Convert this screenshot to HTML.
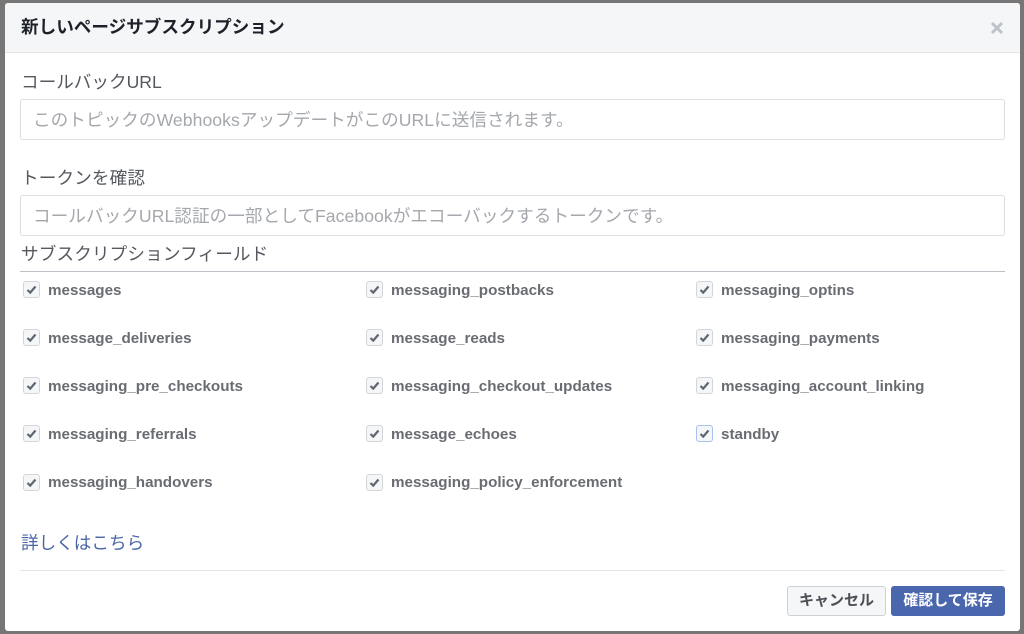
<!DOCTYPE html>
<html lang="ja"><head><meta charset="utf-8">
<style>
html,body{margin:0;padding:0;width:1024px;height:634px;overflow:hidden;background:#767676;font-family:"Liberation Sans","Noto Sans CJK JP",sans-serif}
.a{position:absolute;white-space:nowrap}
#d{position:absolute;left:5px;top:3px;width:1015px;height:628px;background:#fff;border-radius:3px;overflow:hidden}
#h{position:absolute;left:0;top:0;width:1015px;height:49px;background:#f5f6f7;border-bottom:1px solid #e5e5e5}
.t{font-size:17.6px;line-height:24px;color:#55585e;letter-spacing:.14px}
.i{position:absolute;left:20px;border:1px solid #dcdee2;border-radius:3px;box-sizing:border-box;width:985px;height:41px}
.p{font-size:17.6px;line-height:24px;color:#a4a7ac;letter-spacing:.06px}
.c{position:absolute;width:17px;height:17px;box-sizing:border-box;border:1px solid #d3d5d9;border-radius:3px;background:#f5f6f7}
.c svg{position:absolute;left:1px;top:1px}
.l{font-size:15.2px;font-weight:bold;line-height:18px;color:#696c72}
</style></head><body>
<div id="d"><div id="h"></div></div>
<div class="a" style="left:21px;top:15px;font-size:17.6px;line-height:24px;font-weight:bold;color:#1d2129">新しいページサブスクリプション</div>
<svg class="a" style="left:990px;top:21px" width="14" height="14" viewBox="0 0 14 14"><path d="M2 2L12 12M12 2L2 12" stroke="#bec2c9" stroke-width="3"/></svg>
<div class="a t" style="left:21px;top:70px;letter-spacing:0">コールバックURL</div>
<div class="i" style="top:99px"></div>
<div class="a p" style="left:33px;top:108px">このトピックのWebhooksアップデートがこのURLに送信されます。</div>
<div class="a t" style="left:21px;top:166px">トークンを確認</div>
<div class="i" style="top:195px"></div>
<div class="a p" style="left:33px;top:204px">コールバックURL認証の一部としてFacebookがエコーバックするトークンです。</div>
<div class="a t" style="left:21px;top:242px">サブスクリプションフィールド</div>
<div class="a" style="left:20px;top:271px;width:985px;height:1px;background:#bcc0c6"></div>

<div class="c" style="left:23px;top:281px"><svg width="13" height="13" viewBox="0 0 13 13"><path d="M2.5 7L5.2 9.6L10.5 3.5" fill="none" stroke="#5f6673" stroke-width="2.2"/></svg></div><div class="a l" style="left:48px;top:282px">messages</div>
<div class="c" style="left:366px;top:281px"><svg width="13" height="13" viewBox="0 0 13 13"><path d="M2.5 7L5.2 9.6L10.5 3.5" fill="none" stroke="#5f6673" stroke-width="2.2"/></svg></div><div class="a l" style="left:391px;top:282px">messaging_postbacks</div>
<div class="c" style="left:696px;top:281px"><svg width="13" height="13" viewBox="0 0 13 13"><path d="M2.5 7L5.2 9.6L10.5 3.5" fill="none" stroke="#5f6673" stroke-width="2.2"/></svg></div><div class="a l" style="left:721px;top:282px">messaging_optins</div>

<div class="c" style="left:23px;top:329px"><svg width="13" height="13" viewBox="0 0 13 13"><path d="M2.5 7L5.2 9.6L10.5 3.5" fill="none" stroke="#5f6673" stroke-width="2.2"/></svg></div><div class="a l" style="left:48px;top:330px">message_deliveries</div>
<div class="c" style="left:366px;top:329px"><svg width="13" height="13" viewBox="0 0 13 13"><path d="M2.5 7L5.2 9.6L10.5 3.5" fill="none" stroke="#5f6673" stroke-width="2.2"/></svg></div><div class="a l" style="left:391px;top:330px">message_reads</div>
<div class="c" style="left:696px;top:329px"><svg width="13" height="13" viewBox="0 0 13 13"><path d="M2.5 7L5.2 9.6L10.5 3.5" fill="none" stroke="#5f6673" stroke-width="2.2"/></svg></div><div class="a l" style="left:721px;top:330px">messaging_payments</div>

<div class="c" style="left:23px;top:377px"><svg width="13" height="13" viewBox="0 0 13 13"><path d="M2.5 7L5.2 9.6L10.5 3.5" fill="none" stroke="#5f6673" stroke-width="2.2"/></svg></div><div class="a l" style="left:48px;top:378px">messaging_pre_checkouts</div>
<div class="c" style="left:366px;top:377px"><svg width="13" height="13" viewBox="0 0 13 13"><path d="M2.5 7L5.2 9.6L10.5 3.5" fill="none" stroke="#5f6673" stroke-width="2.2"/></svg></div><div class="a l" style="left:391px;top:378px">messaging_checkout_updates</div>
<div class="c" style="left:696px;top:377px"><svg width="13" height="13" viewBox="0 0 13 13"><path d="M2.5 7L5.2 9.6L10.5 3.5" fill="none" stroke="#5f6673" stroke-width="2.2"/></svg></div><div class="a l" style="left:721px;top:378px">messaging_account_linking</div>

<div class="c" style="left:23px;top:425px"><svg width="13" height="13" viewBox="0 0 13 13"><path d="M2.5 7L5.2 9.6L10.5 3.5" fill="none" stroke="#5f6673" stroke-width="2.2"/></svg></div><div class="a l" style="left:48px;top:426px">messaging_referrals</div>
<div class="c" style="left:366px;top:425px"><svg width="13" height="13" viewBox="0 0 13 13"><path d="M2.5 7L5.2 9.6L10.5 3.5" fill="none" stroke="#5f6673" stroke-width="2.2"/></svg></div><div class="a l" style="left:391px;top:426px">message_echoes</div>
<div class="c" style="left:696px;top:425px;border-color:#a9c1f0"><svg width="13" height="13" viewBox="0 0 13 13"><path d="M2.5 7L5.2 9.6L10.5 3.5" fill="none" stroke="#5f6673" stroke-width="2.2"/></svg></div><div class="a l" style="left:721px;top:426px">standby</div>

<div class="c" style="left:23px;top:474px"><svg width="13" height="13" viewBox="0 0 13 13"><path d="M2.5 7L5.2 9.6L10.5 3.5" fill="none" stroke="#5f6673" stroke-width="2.2"/></svg></div><div class="a l" style="left:48px;top:474px">messaging_handovers</div>
<div class="c" style="left:366px;top:474px"><svg width="13" height="13" viewBox="0 0 13 13"><path d="M2.5 7L5.2 9.6L10.5 3.5" fill="none" stroke="#5f6673" stroke-width="2.2"/></svg></div><div class="a l" style="left:391px;top:474px">messaging_policy_enforcement</div>

<div class="a t" style="left:21px;top:531px;color:#4a67a5;letter-spacing:0">詳しくはこちら</div>
<div class="a" style="left:20px;top:570px;width:985px;height:1px;background:#e5e5e5"></div>
<div class="a" style="left:787px;top:586px;width:99px;height:30px;box-sizing:border-box;background:#f5f6f7;border:1px solid #ced0d4;border-radius:3px;text-align:center;font-size:15px;font-weight:bold;line-height:28px;color:#4b4f56">キャンセル</div>
<div class="a" style="left:891px;top:586px;width:114px;height:30px;box-sizing:border-box;background:#4a67ad;border-radius:3px;text-align:center;font-size:15px;font-weight:bold;line-height:29px;color:#fff">確認して保存</div>
</body></html>
